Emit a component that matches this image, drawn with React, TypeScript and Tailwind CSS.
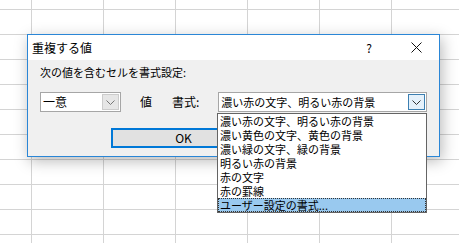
import React from "react";

const rows = [10, 25, 25, 25, 25, 25, 25, 25, 25, 25, 25];
const cols = [32, 72, 72, 72, 72, 72, 72, 72];

const options = [
  "濃い赤の文字、明るい赤の背景",
  "濃い黄色の文字、黄色の背景",
  "濃い緑の文字、緑の背景",
  "明るい赤の背景",
  "赤の文字",
  "赤の罫線",
  "ユーザー設定の書式...",
];

function Chevron({ color }: { color: string }) {
  return (
    <svg width="9" height="5" viewBox="0 0 9 5" fill="none">
      <path d="M0.5 0.5 L4.5 4.5 L8.5 0.5" stroke={color} strokeWidth="1" />
    </svg>
  );
}

function Sheet() {
  return (
    <div className="flex flex-col">
      {rows.map((h, r) => (
        <div key={r} className="flex shrink-0" style={{ height: h }}>
          {cols.map((w, c) => (
            <div
              key={c}
              className="shrink-0 border-r border-b border-[#d4d4d4]"
              style={{ width: w }}
            />
          ))}
        </div>
      ))}
    </div>
  );
}

function Dialog() {
  return (
    <div className="absolute left-[27px] top-[34px] w-[413px] h-[123px] border border-[#2a86d6] bg-[#f0f0f0] shadow-[2px_4px_14px_rgba(0,0,0,0.28)] text-black font-['Noto_Sans_CJK_JP',sans-serif]">
      {/* title bar */}
      <div className="flex h-[25px] items-center bg-white pl-[4px] pr-[17px]">
        <span className="flex-1 text-[12px] leading-[16px]">重複する値</span>
        <span className="text-[12px] leading-[16px] mr-[39px]">?</span>
        <svg width="11" height="11" viewBox="0 0 11 11">
          <path d="M0.5 0.5 L10.5 10.5 M10.5 0.5 L0.5 10.5" stroke="#111" strokeWidth="1" />
        </svg>
      </div>

      {/* body */}
      <div className="pl-[12px] pt-[5px]">
        <div className="h-[14px] text-[11px] leading-[14px]">次の値を含むセルを書式設定:</div>

        <div className="mt-[13px] flex h-[20px] items-center">
          <div className="flex h-[20px] w-[81px] items-center border border-[#a6a6a6] bg-white pl-[2px] pr-[1px]">
            <span className="flex-1 text-[12px] leading-[16px]">一意</span>
            <span className="flex h-[16px] w-[17px] items-center justify-center border border-[#cccccc] bg-[#e6e6e6]">
              <Chevron color="#777" />
            </span>
          </div>
          <span className="ml-[19px] text-[12px] leading-[16px]">値</span>
          <span className="ml-[20px] text-[12px] leading-[16px]">書式:</span>
          <div className="ml-[19px] flex h-[20px] w-[209px] items-center border border-[#a6a6a6] bg-white pl-[2px] pr-[1px]">
            <span className="flex-1 text-[11px] leading-[14px]">濃い赤の文字、明るい赤の背景</span>
            <span className="flex h-[16px] w-[17px] items-center justify-center border border-[#3c7fb1] bg-[#e5f1fb]">
              <Chevron color="#333" />
            </span>
          </div>
        </div>

        <div className="ml-[71px] mt-[16px] flex h-[20px] w-[145px] items-center justify-center border-2 border-[#0078d7] bg-[#e1e1e1] text-[12px] leading-[14px]">
          OK
        </div>
      </div>

      {/* open list */}
      <div className="absolute left-[189px] top-[78px] w-[210px] h-[100px] border border-[#646464] bg-white">
        {options.map((o, i) => {
          const sel = i === options.length - 1;
          return (
            <div
              key={o}
              className={
                sel
                  ? "h-[14px] overflow-hidden border border-dotted border-[#333] bg-[#99c9ef] pl-[1px] text-[11px] leading-[12px]"
                  : "h-[14px] overflow-hidden pl-[2px] text-[11px] leading-[14px]"
              }
            >
              {o}
            </div>
          );
        })}
      </div>
    </div>
  );
}

export default function App() {
  return (
    <div className="relative w-[459px] h-[243px] overflow-hidden bg-white">
      <Sheet />
      <Dialog />
    </div>
  );
}
